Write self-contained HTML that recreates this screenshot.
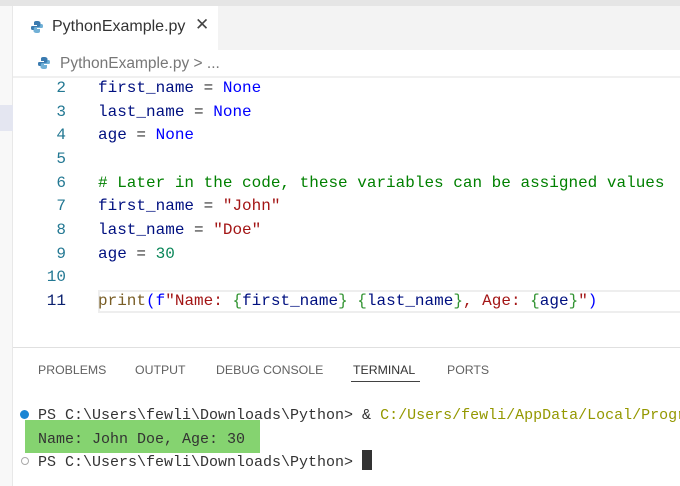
<!DOCTYPE html>
<html><head><meta charset="utf-8"><style>
*{margin:0;padding:0;box-sizing:border-box}
body{width:680px;height:486px;overflow:hidden;background:#fff;position:relative;font-family:"Liberation Sans",sans-serif}
.abs{position:absolute}
.mono{font-family:"Liberation Mono",monospace;white-space:pre}
.code{font-size:16px;line-height:23.67px;color:#001080}
.ln{position:absolute;left:30px;width:36px;text-align:right;color:#237893;font-size:16px;font-family:"Liberation Mono",monospace}
.kw{color:#0000ff}.str{color:#a31515}.cm{color:#008000}.fn{color:#795e26}.br{color:#319331}.op{color:#333}
.tab{position:absolute;top:363px;font-size:12.3px;color:#616161}
.term{font-size:15px;color:#333;line-height:23.5px}
</style></head><body>
<div class="abs" style="left:0;top:0;width:680px;height:6px;background:#e5e5e5"></div>
<div class="abs" style="left:0;top:6px;width:680px;height:44px;background:#f3f3f3"></div>
<div class="abs" style="left:13px;top:6px;width:205px;height:44px;background:#fff"></div>
<div class="abs" style="left:0;top:6px;width:13px;height:480px;background:#f8f8f8;border-right:1px solid #e8e8e8"></div>
<div class="abs" style="left:0;top:105px;width:13px;height:26px;background:#e4e6f1"></div>
<svg class="abs" style="left:30px;top:20px" width="14" height="14" viewBox="0 0 14 14"><path d="M7 1C4 1 4 2 4 3v2h3v1H2C1 6 1 7.5 1 8s0 2 1.5 2H4V8.5C4 7.5 5 7 6 7h3c1 0 1.5-.5 1.5-1.5V3C10.5 2 9.5 1 7 1z" fill="#3b7bb0"/><path d="M7 13c3 0 3-1 3-2V9H7V8h5c1 0 1-1.5 1-2s0-2-1.5-2H10v1.5C10 6.5 9 7 8 7H5C4 7 3.5 7.5 3.5 8.5V11c0 1 1 2 3.5 2z" fill="#4d9ccc" opacity=".8"/></svg>
<div class="abs" style="left:52px;top:18px;font-size:16px;color:#333">PythonExample.py</div>
<div class="abs" style="left:195px;top:15px;font-size:17px;color:#444">✕</div>
<svg class="abs" style="left:37px;top:56px" width="14" height="14" viewBox="0 0 14 14"><path d="M7 1C4 1 4 2 4 3v2h3v1H2C1 6 1 7.5 1 8s0 2 1.5 2H4V8.5C4 7.5 5 7 6 7h3c1 0 1.5-.5 1.5-1.5V3C10.5 2 9.5 1 7 1z" fill="#3b7bb0"/><path d="M7 13c3 0 3-1 3-2V9H7V8h5c1 0 1-1.5 1-2s0-2-1.5-2H10v1.5C10 6.5 9 7 8 7H5C4 7 3.5 7.5 3.5 8.5V11c0 1 1 2 3.5 2z" fill="#4d9ccc" opacity=".8"/></svg>
<div class="abs" style="left:60px;top:55px;font-size:15.5px;color:#777">PythonExample.py &gt; ...</div>
<div class="abs" style="left:13px;top:76px;width:667px;height:2px;background:#f0f0f0"></div>
<div class="abs" style="left:98px;top:290px;width:582px;height:23px;border:2px solid #eeeeee;border-right:none"></div>
<div class="abs code" style="left:0;top:77px;width:680px">
<div class="ln" style="top:0">2</div><div class="ln" style="top:23.67px">3</div><div class="ln" style="top:47.3px">4</div><div class="ln" style="top:71px">5</div><div class="ln" style="top:94.7px">6</div><div class="ln" style="top:118.3px">7</div><div class="ln" style="top:142px">8</div><div class="ln" style="top:165.7px">9</div><div class="ln" style="top:189.3px">10</div><div class="ln" style="top:213px;color:#0b216f">11</div>
<div class="mono" style="position:absolute;left:98px;top:0">first_name <span class="op">=</span> <span class="kw">None</span>
last_name <span class="op">=</span> <span class="kw">None</span>
age <span class="op">=</span> <span class="kw">None</span>

<span class="cm"># Later in the code, these variables can be assigned values</span>
first_name <span class="op">=</span> <span class="str">"John"</span>
last_name <span class="op">=</span> <span class="str">"Doe"</span>
age <span class="op">=</span> <span style="color:#098658">30</span>

<span class="fn">print</span><span class="kw">(</span><span class="kw">f</span><span class="str">"Name: </span><span class="br">{</span>first_name<span class="br">}</span> <span class="br">{</span>last_name<span class="br">}</span><span class="str">, Age: </span><span class="br">{</span>age<span class="br">}</span><span class="str">"</span><span class="kw">)</span></div>
</div>
<div class="abs" style="left:13px;top:347px;width:667px;height:1px;background:#e0e0e0"></div>
<div class="tab" style="left:38px">PROBLEMS</div>
<div class="tab" style="left:135px">OUTPUT</div>
<div class="tab" style="left:216px">DEBUG CONSOLE</div>
<div class="tab" style="left:353px;color:#333">TERMINAL</div>
<div class="abs" style="left:351px;top:381px;width:69px;height:1px;background:#424242"></div>
<div class="tab" style="left:447px">PORTS</div>
<div class="abs" style="left:25px;top:420px;width:235px;height:33px;background:#85d370"></div>
<div class="abs" style="left:20px;top:410px;width:9px;height:9px;border-radius:50%;background:#1a85d4"></div>
<div class="abs" style="left:21px;top:457px;width:8px;height:8px;border-radius:50%;border:1px solid #aaa"></div>
<div class="abs mono term" style="left:38px;top:404px">PS C:\Users\fewli\Downloads\Python&gt; &amp; <span style="color:#949800">C:/Users/fewli/AppData/Local/Programs</span>
Name: John Doe, Age: 30
PS C:\Users\fewli\Downloads\Python&gt; </div>
<div class="abs" style="left:362px;top:450px;width:10px;height:20px;background:#333"></div>
</body></html>
